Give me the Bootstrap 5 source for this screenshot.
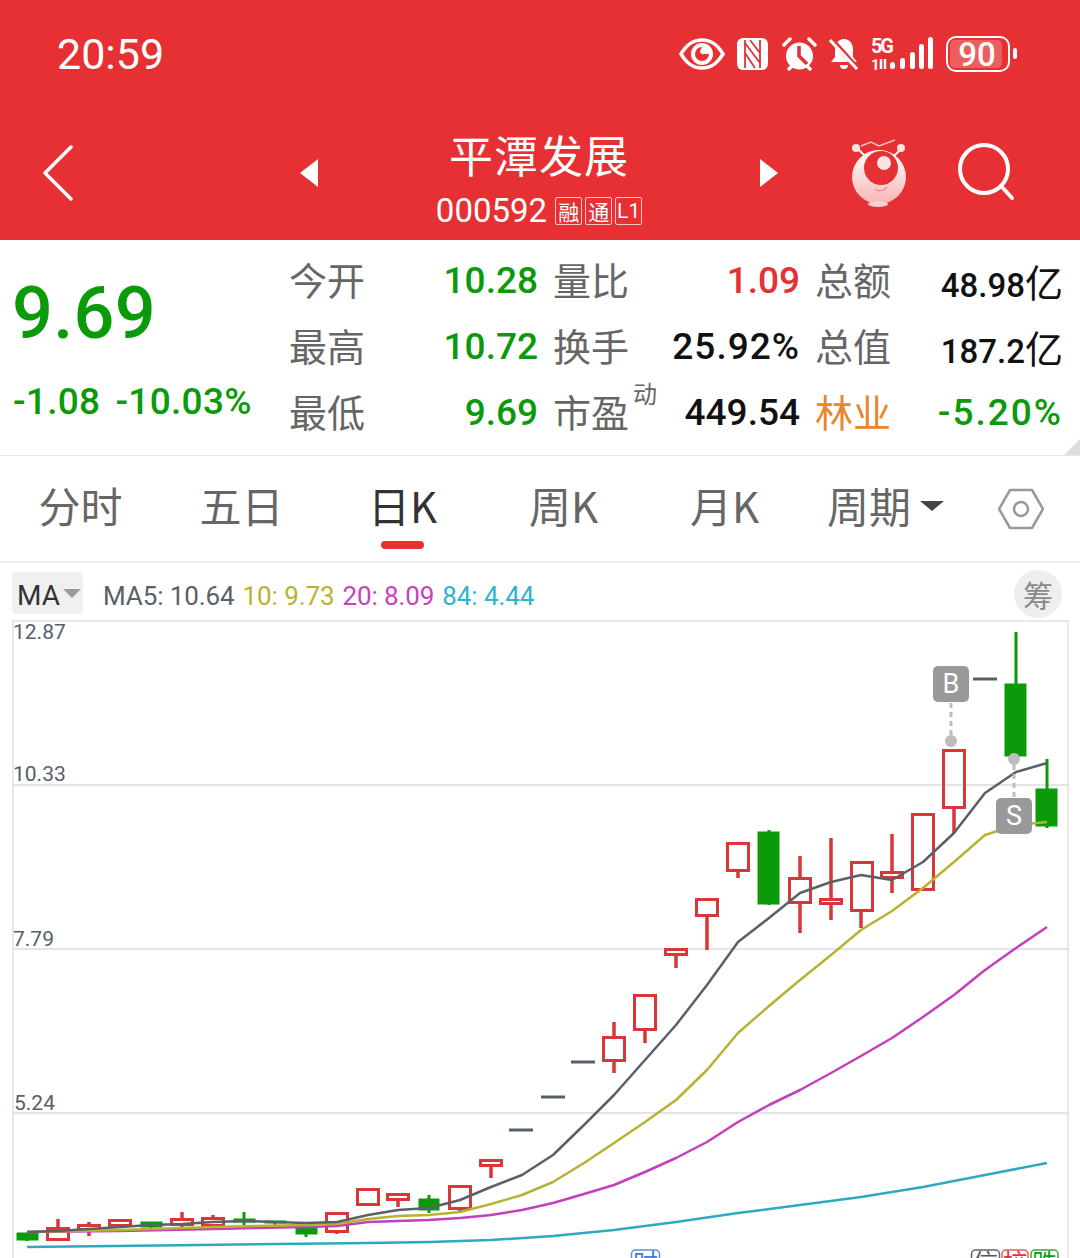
<!DOCTYPE html>
<html lang="zh-CN">
<head>
<meta charset="utf-8">
<title>平潭发展</title>
<link href="https://cdn.jsdelivr.net/npm/bootstrap@5.3.0/dist/css/bootstrap.min.css" rel="stylesheet">
<style>
html,body{margin:0;background:#fff;overflow:hidden}
body{width:1080px;height:1258px;font-family:Roboto,"Noto Sans CJK SC",sans-serif}
.cjk{font-family:"Noto Sans CJK SC",sans-serif}
.hdr{height:240px;background:#e63033;color:#fff}
.status-row{height:108px;padding:0 62px 0 57px}
.clock{font-size:43px;line-height:1}
.title-row{height:132px}
.back-col{width:300px;padding-left:42px;margin-top:-2px}
.tri-col{width:18px;margin-top:-3px}
.mid-col{width:442px;margin-top:9px}
.stock-name{font-size:44px;line-height:52px;letter-spacing:1px}
.code-line{font-size:33px;line-height:38px;margin-top:12px;gap:8px}
.mini-tag{border:1px solid rgba(255,255,255,.75);border-radius:2px;font-size:21px;line-height:26px;width:27px;height:28px;text-align:center}
.quote{height:216px;border-bottom:1px solid #e6e6e6}
.price-col{width:289px;padding-left:12px}
.big-price{font-size:72px;line-height:1;color:#0a9a0a;margin-top:38px;letter-spacing:.3px;font-weight:500}
.chg{font-size:37px;line-height:1;color:#0a9a0a;margin-top:33px;gap:15px;letter-spacing:.3px;font-weight:500;padding-left:1px}
.fig-grid{display:grid;grid-template-columns:76px 173px 90px 172px 91px 172px;column-gap:0;grid-auto-rows:66px;padding-top:8px}
.fig-l{font-size:38px;color:#666;line-height:62px;white-space:nowrap}
.fig-l2{margin-left:15px}
.fig-v{font-size:37px;line-height:66px;text-align:right;white-space:nowrap;font-weight:500}
.fig-s{font-size:33px}
.fig-y{font-size:38px;font-weight:400}
.wide-a{letter-spacing:1px}
.wide-b{letter-spacing:2px}
.up{color:#e63033}.dn{color:#0a9a0a}.blk{color:#111}.sec{color:#e8872b}
.sup-mark{position:absolute;left:80px;top:-2px;font-size:24px;line-height:30px;color:#666}
.corner{position:absolute;right:0;bottom:0;width:0;height:0;border-style:solid;border-width:0 0 16px 16px;border-color:transparent transparent #ddd transparent}
.tabs{height:107px;border-bottom:2px solid #eee}
.tab-i{width:161px;font-size:42px;line-height:1;color:#666;margin-top:28px;height:79px}
.tab-on{color:#333}
.tab-on::after{content:"";position:absolute;left:59px;top:57px;width:43px;height:8px;border-radius:4px;background:#e63033}
.caret-s{width:0;height:0;border-style:solid;border-width:10px 12px 0 12px;border-color:#444 transparent transparent transparent;margin-left:9px;margin-top:3px}
.ma-row{height:57px;padding:9px 0 0 12px}
.ma-btn{width:71px;height:42px;background:#f0f0f0;border-radius:4px;font-size:28px;color:#333;line-height:42px;padding:5px 0 0 5px}
.caret-g{width:0;height:0;border-style:solid;border-width:9px 9px 0 9px;border-color:#9a9a9a transparent transparent transparent;margin-left:3px;margin-top:-4px}
.ma-vals{font-size:26px;line-height:42px;margin-left:20px;gap:8px;letter-spacing:-.1px;white-space:nowrap;padding-top:3px}
.m5{color:#5a6068}.m10{color:#b8b232}.m20{color:#c93fc0}.m84{color:#2fb3cf}
.chip-round{position:absolute;right:18px;top:7px;width:48px;height:48px;border-radius:50%;background:#eee;color:#8a8a8a;font-size:30px;line-height:48px;text-align:center}
.chart-svg{display:block}
.ax{font-family:Roboto,sans-serif;font-size:21px;fill:#56606a}
.cr{fill:none;stroke:#d9363a;stroke-width:3}
.cg{fill:#0a9a0a;stroke:#0a9a0a;stroke-width:1}
.wr{stroke:#d9363a;stroke-width:3.5}
.wg{stroke:#0a9a0a;stroke-width:3}
.dash{stroke:#56606a;stroke-width:3}
.ln{fill:none;stroke-width:2.500;stroke-linejoin:round}
</style>
</head>
<body>
<header class="hdr">
  <div class="status-row d-flex align-items-center justify-content-between">
    <span class="clock">20:59</span>
    <div class="d-flex align-items-center" style="gap:12px">
      <svg width="46" height="32" viewBox="0 0 46 32"><path d="M2 16C8 6 14 2 23 2s15 4 21 14c-6 10-12 14-21 14S8 26 2 16z" fill="none" stroke="#fff" stroke-width="3.500"/><circle cx="23" cy="16" r="11" fill="#fff"/><path d="M23 9a7 7 0 1 0 7 7h-5a3 3 0 0 1-4-3z" fill="#e63033"/></svg>
      <svg width="31" height="32" viewBox="0 0 31 32"><rect width="31" height="32" rx="6" fill="#fff"/><path d="M8 2V30M23 2V30" stroke="#e63033" stroke-width="1.800"/><path d="M8 5L23 25M13 2L23 15M8 15L18 30" fill="none" stroke="#e63033" stroke-width="1.800"/></svg>
      <svg width="35" height="35" viewBox="0 0 35 35" style="margin-left:2px"><circle cx="17.500" cy="19" r="13.500" fill="#fff"/><path d="M17 9v10l8 8" fill="none" stroke="#e63033" stroke-width="3.500"/><path d="M2 8l6-6M33 8l-6-6M7 32l3-3M28 32l-3-3" stroke="#fff" stroke-width="3.500" stroke-linecap="round"/></svg>
      <svg width="30" height="34" viewBox="0 0 30 34"><path d="M15 2c-6 0-9 5-9 11v7l-4 5h26l-4-5v-7c0-6-3-11-9-11z" fill="#fff"/><path d="M11 28a4 4 0 0 0 8 0z" fill="#fff"/><path d="M3 3l25 28" stroke="#e63033" stroke-width="5"/><path d="M1 3l27 29" stroke="#fff" stroke-width="3"/></svg>
      <svg width="63" height="44" viewBox="0 -5 63 44"><text x="0" y="16" font-family="Roboto,sans-serif" font-size="20" font-weight="700" fill="#fff" textLength="23">5G</text><text x="0" y="33" font-family="Roboto,sans-serif" font-size="15" font-weight="700" fill="#fff">1</text><path d="M10 22v10M14 22v10" stroke="#fff" stroke-width="2.500"/><rect x="19" y="25" width="5" height="7" rx="2.500" fill="#fff"/><rect x="29" y="21" width="5" height="11" rx="2.500" fill="#fff"/><rect x="39" y="15" width="5" height="17" rx="2.500" fill="#fff"/><rect x="48" y="7" width="5" height="25" rx="2.500" fill="#fff"/><rect x="57" y="0" width="5" height="32" rx="2.500" fill="#fff"/></svg>
      <svg width="72" height="44" viewBox="0 -4 72 44"><rect x="1" y="1" width="62" height="34" rx="9" fill="none" stroke="#fff" stroke-width="2"/><rect x="4" y="4" width="52" height="28" rx="5" fill="#fff" fill-opacity=".22"/><rect x="67" y="12" width="4" height="11" rx="2" fill="#fff"/><text x="31" y="30" text-anchor="middle" font-family="Roboto,sans-serif" font-size="33" font-weight="500" fill="#fff">90</text></svg>
    </div>
  </div>
  <div class="title-row d-flex align-items-center">
    <div class="back-col"><svg class="d-block" width="31" height="56" viewBox="0 0 31 56"><path d="M29 2L3 28l26 26" fill="none" stroke="#fff" stroke-width="3.500" stroke-linecap="round" stroke-linejoin="round"/></svg></div>
    <div class="tri-col"><svg class="d-block" width="18" height="28" viewBox="0 0 18 28"><path d="M18 0v28L0 14z" fill="#fff"/></svg></div>
    <div class="mid-col text-center">
      <div class="stock-name cjk">平潭发展</div>
      <div class="code-line d-flex justify-content-center align-items-center">
        <span>000592</span>
        <span class="d-flex" style="gap:3px"><span class="mini-tag cjk">融</span><span class="mini-tag cjk">通</span><span class="mini-tag">L1</span></span>
      </div>
    </div>
    <div class="tri-col"><svg class="d-block" width="18" height="28" viewBox="0 0 18 28"><path d="M0 0v28l18-14z" fill="#fff"/></svg></div>
    <svg class="d-block" style="margin-left:73px;margin-top:-2px" width="58" height="70" viewBox="0 0 58 70">
      <defs><linearGradient id="bodyg" x1="0" y1="0" x2="0" y2="1"><stop offset="0" stop-color="#fff"/><stop offset="1" stop-color="#f7b4b4"/></linearGradient></defs>
      <path d="M10 8l10-4 8 4 16-6" fill="none" stroke="#f7c0c0" stroke-width="1.500"/>
      <path d="M6 10l8 8M51 10l-8 8" stroke="#fff" stroke-width="2"/>
      <circle cx="5" cy="10" r="4" fill="#fde3e3"/><circle cx="50" cy="10" r="4" fill="#fde3e3"/>
      <circle cx="28" cy="39" r="27" fill="url(#bodyg)"/>
      <circle cx="30" cy="30" r="17" fill="#e63033"/>
      <circle cx="33" cy="25" r="7" fill="#fde3e3"/>
      <path d="M24 51c4 3 9 2 12-2" fill="none" stroke="#f08f8f" stroke-width="1.500"/>
      <ellipse cx="27" cy="66" rx="10" ry="3" fill="#fbd0d0"/>
    </svg>
    <svg class="d-block" style="margin-left:48px;margin-top:-2px" width="58" height="60" viewBox="0 0 58 60"><circle cx="27" cy="26" r="24" fill="none" stroke="#fff" stroke-width="4"/><path d="M45 44l10 11" stroke="#fff" stroke-width="4" stroke-linecap="round"/></svg>
  </div>
</header>

<section class="quote d-flex position-relative">
  <div class="price-col">
    <div class="big-price">9.69</div>
    <div class="chg d-flex"><span>-1.08</span><span>-10.03%</span></div>
  </div>
  <div class="fig-grid">
    <span class="fig-l cjk">今开</span><span class="fig-v dn">10.28</span><span class="fig-l fig-l2 cjk">量比</span><span class="fig-v up">1.09</span><span class="fig-l fig-l2 cjk">总额</span><span class="fig-v blk fig-s">48.98<span class="cjk fig-y">亿</span></span>
    <span class="fig-l cjk">最高</span><span class="fig-v dn">10.72</span><span class="fig-l fig-l2 cjk">换手</span><span class="fig-v blk wide-a">25.92%</span><span class="fig-l fig-l2 cjk">总值</span><span class="fig-v blk fig-s">187.2<span class="cjk fig-y">亿</span></span>
    <span class="fig-l cjk">最低</span><span class="fig-v dn">9.69</span><span class="fig-l fig-l2 cjk position-relative">市盈<span class="sup-mark">动</span></span><span class="fig-v blk">449.54</span><span class="fig-l fig-l2 cjk sec">林业</span><span class="fig-v dn wide-b">-5.20%</span>
  </div>
  <span class="corner"></span>
</section>

<nav class="tabs d-flex">
  <div class="tab-i text-center cjk">分时</div>
  <div class="tab-i text-center cjk">五日</div>
  <div class="tab-i text-center cjk tab-on position-relative">日K</div>
  <div class="tab-i text-center cjk">周K</div>
  <div class="tab-i text-center cjk">月K</div>
  <div class="tab-i cjk d-flex justify-content-center align-items-start"><span>周期</span><span class="caret-s" style="margin-top:17px"></span></div>
  <svg class="d-block" style="margin-top:32px;margin-left:32px" width="46" height="42" viewBox="0 0 46 42"><path d="M12 2h22l11 19-11 19H12L1 21z" fill="none" stroke="#999" stroke-width="2.500" stroke-linejoin="round"/><circle cx="23" cy="21" r="7" fill="none" stroke="#999" stroke-width="2.500"/></svg>
</nav>

<div class="ma-row d-flex position-relative">
  <div class="ma-btn d-flex align-items-center"><span>MA</span><span class="caret-g"></span></div>
  <div class="ma-vals d-flex">
    <span class="m5">MA5: 10.64</span><span class="m10">10: 9.73</span><span class="m20">20: 8.09</span><span class="m84">84: 4.44</span>
  </div>
  <div class="chip-round cjk">筹</div>
</div>

<svg class="chart-svg" width="1080" height="638" viewBox="0 620 1080 638">
  <path d="M13 1258V621H1068V1258" fill="none" stroke="#e8e8e8" stroke-width="2"/>
  <path d="M13 785H1068M13 949H1068M13 1113H1068" stroke="#dcdcdc" stroke-width="1.500"/>
  <text class="ax" x="13" y="639">12.87</text>
  <text class="ax" x="13" y="781">10.33</text>
  <text class="ax" x="13" y="946">7.79</text>
  <text class="ax" x="14" y="1110">5.24</text>

  <g>
    <path class="wg" d="M27 1233V1241M151 1222V1231M244 1212V1225M275 1221V1227M306 1226V1237M429 1195V1213M769 830V905M1016 632V756M1047 759V828"/>
    <rect class="cg" x="17" y="1233" width="21" height="7"/>
    <rect class="cg" x="141" y="1222" width="21" height="5"/>
    <rect class="cg" x="234" y="1219" width="21" height="3"/>
    <rect class="cg" x="265" y="1221" width="21" height="2"/>
    <rect class="cg" x="296" y="1228" width="21" height="6"/>
    <rect class="cg" x="419" y="1199" width="20" height="11"/>
    <rect class="cg" x="758" y="832" width="21" height="72"/>
    <rect class="cg" x="1005" y="684" width="21" height="72"/>
    <rect class="cg" x="1036" y="789" width="21" height="37"/>
  </g>
  <g>
    <path class="wr" d="M58 1219V1227M89 1222V1225M89 1229V1236M120 1225V1228M182 1212V1219M182 1224V1227M213 1215V1217M337 1232V1234M398 1200V1207M460 1209V1213M491 1166V1178M614 1022V1036M614 1061V1073M645 1030V1043M676 956V968M707 916V950M738 871V878M800 856V877M800 903V933M831 838V899M831 904V920M861 911V928M892 834V871M892 878V893M954 808V833"/>
    <rect class="cr" x="47.500" y="1228.500" width="21" height="11"/>
    <rect class="cr" x="78.500" y="1225.500" width="21" height="4"/>
    <rect class="cr" x="109.500" y="1220.500" width="21" height="5"/>
    <rect class="cr" x="171.500" y="1219.500" width="21" height="5"/>
    <rect class="cr" x="202.500" y="1218.500" width="21" height="7"/>
    <rect class="cr" x="326.500" y="1213.500" width="21" height="18"/>
    <rect class="cr" x="357.500" y="1189.500" width="21" height="15"/>
    <rect class="cr" x="387.500" y="1194.500" width="21" height="5"/>
    <rect class="cr" x="449.500" y="1186.500" width="21" height="22"/>
    <rect class="cr" x="480.500" y="1160.500" width="21" height="5"/>
    <rect class="cr" x="603.500" y="1037.500" width="21" height="23"/>
    <rect class="cr" x="634.500" y="995.500" width="21" height="34"/>
    <rect class="cr" x="665.500" y="949.500" width="21" height="5"/>
    <rect class="cr" x="696.500" y="899.500" width="21" height="16"/>
    <rect class="cr" x="727.500" y="843.500" width="21" height="27"/>
    <rect class="cr" x="789.500" y="878.500" width="21" height="24"/>
    <rect class="cr" x="820.500" y="899.500" width="21" height="4"/>
    <rect class="cr" x="851.500" y="862.500" width="21" height="48"/>
    <rect class="cr" x="881.500" y="872.500" width="21" height="5"/>
    <rect class="cr" x="912.500" y="814.500" width="21" height="75"/>
    <rect class="cr" x="943.500" y="750.500" width="21" height="57"/>
  </g>
  <path class="dash" d="M509 1130H533M541 1097H565M571 1062H595M973 679H997"/>

  <polyline class="ln" stroke="#2fa9bf" points="27,1247 200,1245 368,1243 430,1242 491,1240 553,1236 614,1230 676,1222 738,1213 800,1205 861,1197 923,1187 985,1175 1047,1163"/>
  <polyline class="ln" stroke="#c23fbd" points="27,1232 120,1231 213,1229 306,1227 337,1226 368,1222 398,1221 429,1220 460,1218 491,1215 522,1210 553,1203 584,1194 614,1185 645,1172 676,1158 707,1142 738,1122 769,1105 800,1090 831,1073 861,1056 892,1038 923,1017 954,995 985,970 1016,948 1047,927"/>
  <polyline class="ln" stroke="#b8b232" points="27,1232 120,1230 213,1227 306,1225 337,1224 368,1219 398,1216 429,1215 460,1212 491,1204 522,1195 553,1182 584,1163 614,1143 645,1122 676,1100 707,1070 738,1033 769,1006 800,980 831,955 861,930 892,911 923,888 954,862 985,835 1016,825 1047,822"/>
  <polyline class="ln" stroke="#5a6068" points="27,1232 58,1231 89,1229 120,1227 151,1225 182,1224 213,1222 244,1221 275,1222 306,1223 337,1222 368,1215 398,1210 429,1208 460,1200 491,1187 522,1175 553,1155 584,1125 614,1095 645,1060 676,1025 707,985 738,942 769,918 800,893 831,882 861,875 892,880 923,862 954,833 985,793 1016,772 1047,763"/>

  <path d="M951 703V735M1014 765V798" stroke="#bdbdbd" stroke-width="3" stroke-dasharray="5 4"/>
  <circle cx="951" cy="741" r="6" fill="#bdbdbd"/>
  <circle cx="1014" cy="759" r="6" fill="#bdbdbd"/>
  <rect x="933" y="666" width="36" height="36" rx="5" fill="#999"/>
  <text x="951" y="693" text-anchor="middle" font-family="Roboto,sans-serif" font-size="27" fill="#fff">B</text>
  <rect x="996" y="798" width="36" height="36" rx="5" fill="#999"/>
  <text x="1014" y="825" text-anchor="middle" font-family="Roboto,sans-serif" font-size="27" fill="#fff">S</text>

  <rect x="631.500" y="1250" width="28" height="30" rx="4" fill="#fff" stroke="#5b8fd8" stroke-width="1.500"/>
  <text x="645.500" y="1272" text-anchor="middle" class="cjk" font-size="25" fill="#3f7bd0">时</text>
  <rect x="971.500" y="1250" width="28" height="30" rx="4" fill="#fff" stroke="#666" stroke-width="1.500"/>
  <text x="985.500" y="1272" text-anchor="middle" class="cjk" font-size="25" fill="#555">信</text>
  <rect x="1002" y="1250" width="26" height="30" rx="4" fill="#fff" stroke="#e06060" stroke-width="1.500"/>
  <text x="1015" y="1272" text-anchor="middle" class="cjk" font-size="25" fill="#d9363a">校</text>
  <rect x="1031" y="1250" width="27" height="30" rx="4" fill="#fff" stroke="#3aa53a" stroke-width="1.500"/>
  <text x="1044.500" y="1272" text-anchor="middle" class="cjk" font-size="25" fill="#0a9a0a">跌</text>
</svg>
<script src="https://cdn.jsdelivr.net/npm/bootstrap@5.3.0/dist/js/bootstrap.bundle.min.js"></script>
</body>
</html>
